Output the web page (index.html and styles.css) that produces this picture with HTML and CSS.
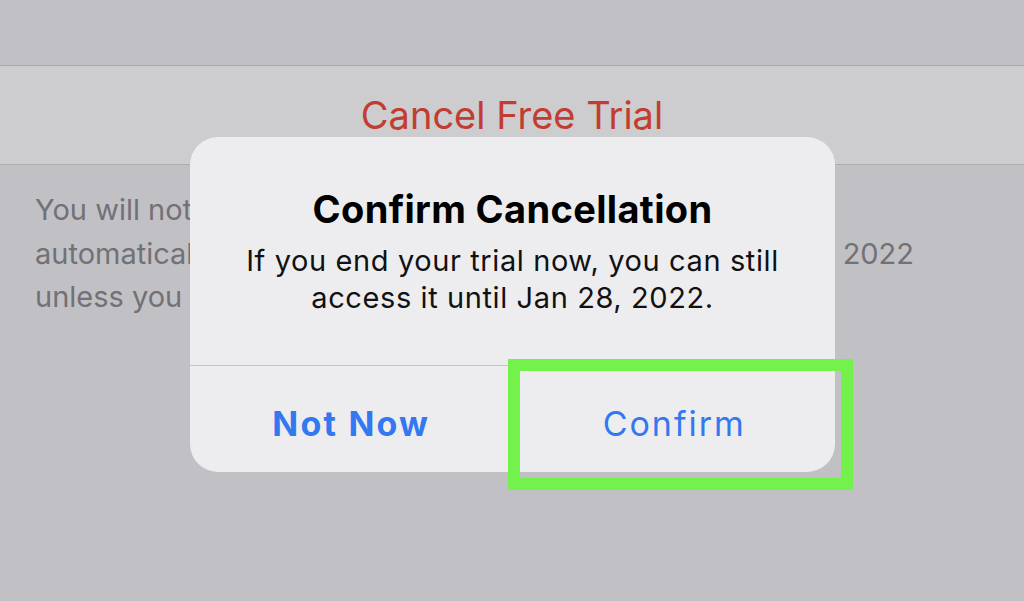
FILE: index.html
```html
<!DOCTYPE html>
<html>
<head>
  <title>Subscriptions - Cancel Free Trial</title>
  <link rel="stylesheet" href="styles.css">
</head>
<body>
  <div class="screen">
    <div class="top-space"></div>
    <div class="cancel-row">
      <span class="cancel-link">Cancel Free Trial</span>
    </div>
    <p class="note">
      <span class="note-line">You will not be charged again and your trial</span>
      <span class="note-line wide">automatically ends, but you keep access until Jan 28, 2022</span>
      <span class="note-line">unless you subscribe again.</span>
    </p>

    <div class="alert">
      <div class="alert-body">
        <h2 class="alert-title">Confirm Cancellation</h2>
        <p class="alert-msg">If you end your trial now, you can still<br>access it until Jan 28, 2022.</p>
      </div>
      <div class="alert-actions">
        <button class="alert-btn primary">Not Now</button>
        <button class="alert-btn">Confirm</button>
      </div>
    </div>

    <div class="highlight"></div>
  </div>
</body>
</html>
```

FILE: styles.css
```css
body {
  margin: 0;
  padding: 0;
  background-color: #c1c0c5;
  font-family: Inter, "Noto Sans", sans-serif;
  overflow: hidden;
}

.screen {
  position: relative;
  width: 1024px;
  height: 601px;
  display: flex;
  flex-direction: column;
}

.top-space {
  height: 65px;
}

.cancel-row {
  height: 98px;
  border-top: 1px solid #a8a8ac;
  border-bottom: 1px solid #acacb0;
  background-color: #cdcdcf;
  text-align: center;
  line-height: 98px;
}

.cancel-link {
  color: #c23c31;
  font-size: 38px;
}

.note {
  margin: 23px 0 0 35px;
  width: 879px;
  color: #727176;
  font-size: 29px;
  line-height: 43.5px;
}

.note-line {
  display: block;
  white-space: nowrap;
}

.note-line.wide {
  text-align: justify;
  text-align-last: justify;
  white-space: normal;
}

/* the alert sits over the page */
.alert {
  position: absolute;
  left: 190px;
  top: 137px;
  width: 645px;
  height: 335px;
  background-color: #ededf0;
  border-radius: 28px;
  display: flex;
  flex-direction: column;
  overflow: hidden;
}

.alert-body {
  height: 229px;
  padding-top: 50px;
  box-sizing: border-box;
  text-align: center;
  border-bottom: 1px solid #c5c5c9;
}

.alert-title {
  margin: 0;
  font-size: 38px;
  line-height: 44px;
  font-weight: 700;
  letter-spacing: 0.35px;
  color: #000;
}

.alert-msg {
  margin: 11px 0 0;
  font-size: 29px;
  line-height: 37px;
  letter-spacing: 0.6px;
  color: #111;
}

.alert-actions {
  flex: 1;
  display: grid;
  grid-template-columns: 1fr 1fr;
}

.alert-btn {
  border: none;
  background: none;
  font-family: inherit;
  font-size: 34px;
  letter-spacing: 2px;
  color: #3478f0;
  padding: 8px 0 0;
  margin: 0;
}

.alert-btn + .alert-btn {
  border-left: 1px solid #c5c5c9;
}

.alert-btn.primary {
  font-weight: 700;
  letter-spacing: 2.2px;
}

.highlight {
  position: absolute;
  left: 508px;
  top: 359px;
  width: 345px;
  height: 131px;
  box-sizing: border-box;
  border: 12px solid #73f24c;
}
```
